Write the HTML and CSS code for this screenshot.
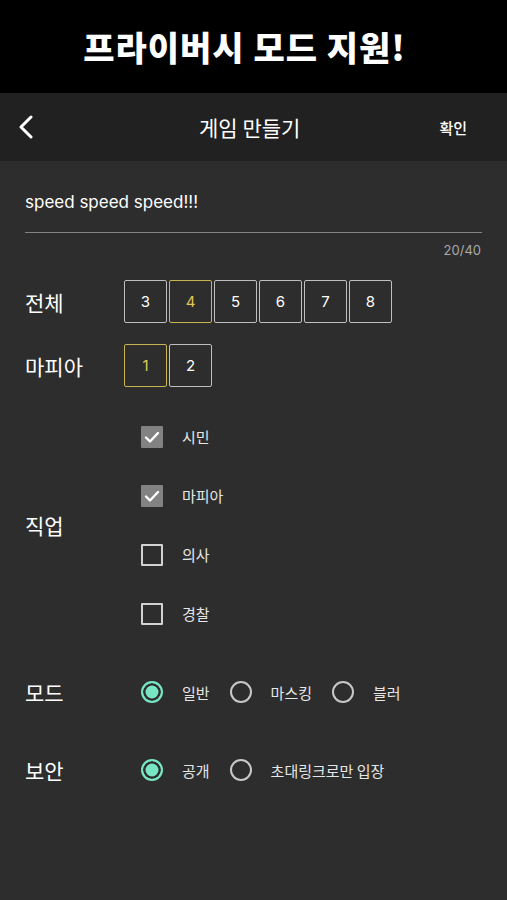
FILE: index.html
```html
<!DOCTYPE html>
<html>
<head>
  <title>게임 만들기</title>
  <meta name="viewport" content="width=device-width, initial-scale=1">
  <link rel="stylesheet" href="styles.css">
</head>
<body>

  <div class="banner">프라이버시 모드 지원!</div>

  <div class="header">
    <button class="back-button">
      <svg width="16" height="24" viewBox="0 0 16 24">
        <path d="M13 2 L3 12 L13 22" fill="none" stroke="white" stroke-width="3" stroke-linecap="round" stroke-linejoin="round"/>
      </svg>
    </button>
    <p class="header-title">게임 만들기</p>
    <button class="confirm-button">확인</button>
  </div>

  <div class="content">
    <div class="name-field">
      <p class="name-text">speed speed speed!!!</p>
    </div>
    <p class="counter">20/40</p>

    <div class="row">
      <p class="label">전체</p>
      <div class="boxes">
        <div class="num-box">3</div>
        <div class="num-box selected">4</div>
        <div class="num-box">5</div>
        <div class="num-box">6</div>
        <div class="num-box">7</div>
        <div class="num-box">8</div>
      </div>
    </div>

    <div class="row mafia-row">
      <p class="label">마피아</p>
      <div class="boxes">
        <div class="num-box selected">1</div>
        <div class="num-box">2</div>
      </div>
    </div>

    <div class="row job-row">
      <p class="label">직업</p>
      <div class="checks">
        <div class="check-item">
          <span class="checkbox checked">
            <svg width="22" height="22" viewBox="0 0 22 22">
              <path d="M5 11.5 L9 15.5 L17 7" fill="none" stroke="white" stroke-width="2.4" stroke-linecap="round" stroke-linejoin="round"/>
            </svg>
          </span>
          <span class="option-text">시민</span>
        </div>
        <div class="check-item">
          <span class="checkbox checked">
            <svg width="22" height="22" viewBox="0 0 22 22">
              <path d="M5 11.5 L9 15.5 L17 7" fill="none" stroke="white" stroke-width="2.4" stroke-linecap="round" stroke-linejoin="round"/>
            </svg>
          </span>
          <span class="option-text">마피아</span>
        </div>
        <div class="check-item">
          <span class="checkbox"></span>
          <span class="option-text">의사</span>
        </div>
        <div class="check-item">
          <span class="checkbox"></span>
          <span class="option-text">경찰</span>
        </div>
      </div>
    </div>

    <div class="row radio-row">
      <p class="label">모드</p>
      <div class="radios">
        <span class="radio checked"></span><span class="option-text">일반</span>
        <span class="radio"></span><span class="option-text">마스킹</span>
        <span class="radio"></span><span class="option-text">블러</span>
      </div>
    </div>

    <div class="row radio-row security-row">
      <p class="label">보안</p>
      <div class="radios">
        <span class="radio checked"></span><span class="option-text">공개</span>
        <span class="radio"></span><span class="option-text">초대링크로만 입장</span>
      </div>
    </div>
  </div>

</body>
</html>
```

FILE: styles.css
```css
body {
  background-color: rgb(45, 45, 45);
  color: white;
  font-family: "Noto Sans CJK KR", "Noto Sans", sans-serif;
  margin: 0;
  min-height: 900px;
}

p {
  margin: 0;
}

.banner {
  background-color: black;
  height: 93px;
  display: flex;
  justify-content: center;
  align-items: center;
  font-size: 34px;
  font-weight: 900;
  letter-spacing: 1px;
  padding-right: 18px;
  box-sizing: border-box;
}

.header {
  background-color: rgb(33, 33, 33);
  height: 68px;
  display: flex;
  align-items: center;
  justify-content: space-between;
  padding: 0 40px 0 18px;
}

.back-button {
  background-color: transparent;
  border: none;
  padding: 0;
  width: 20px;
  height: 26px;
  display: flex;
  align-items: center;
}

.header-title {
  font-size: 21px;
  font-weight: 400;
  padding-left: 22px;
}

.confirm-button {
  background-color: transparent;
  border: none;
  color: white;
  font-family: inherit;
  font-size: 15px;
  font-weight: 500;
  padding: 0;
}

.content {
  padding: 0 25px;
}

.name-field {
  border-bottom: 1.5px solid rgb(130, 130, 130);
  padding: 25px 0 14px;
}

.name-text {
  font-family: "Inter", "Noto Sans", sans-serif;
  font-size: 17px;
  line-height: 32px;
}

.counter {
  text-align: right;
  font-family: "Inter", sans-serif;
  font-size: 13px;
  color: rgb(170, 170, 170);
  margin-top: 9px;
  padding-right: 1px;
}

.row {
  display: flex;
  align-items: center;
}

.label {
  width: 99px;
  font-size: 21px;
  font-weight: 400;
}

.boxes {
  display: flex;
  gap: 2px;
  margin-top: 22px;
}

.row .label {
  margin-top: 22px;
}

.mafia-row .boxes,
.mafia-row .label {
  margin-top: 21px;
}

.num-box {
  width: 43px;
  height: 43px;
  box-sizing: border-box;
  border: 1.5px solid rgb(190, 190, 190);
  border-radius: 2px;
  display: flex;
  justify-content: center;
  align-items: center;
  font-family: "Inter", sans-serif;
  font-size: 15px;
}

.num-box.selected {
  border-color: rgb(200, 180, 80);
  color: rgb(225, 200, 90);
}

.job-row {
  margin-top: 38px;
}

.job-row .label {
  margin-top: 0;
}

.checks {
  display: flex;
  flex-direction: column;
  gap: 36px;
  padding-left: 17px;
}

.check-item {
  display: flex;
  align-items: center;
  height: 23px;
}

.checkbox {
  width: 22px;
  height: 22px;
  box-sizing: border-box;
  border: 2px solid rgb(210, 210, 210);
  border-radius: 1px;
  margin-right: 19px;
}

.checkbox.checked {
  background-color: rgb(130, 130, 130);
  border: none;
}

.option-text {
  font-size: 15px;
  color: rgb(230, 230, 230);
}

.radio-row {
  margin-top: 52px;
}

.radio-row .label {
  margin-top: 0;
}

.security-row {
  margin-top: 48px;
}

.radios {
  display: flex;
  align-items: center;
  padding-left: 17px;
}

.radio {
  width: 22px;
  height: 22px;
  box-sizing: border-box;
  border: 2px solid rgb(200, 200, 200);
  border-radius: 50%;
  margin-right: 19px;
}

.radio.checked {
  border-color: rgb(120, 230, 195);
  background-color: rgb(120, 230, 195);
  box-shadow: inset 0 0 0 2.5px rgb(45, 45, 45);
}

.radios .option-text {
  margin-right: 20px;
}
```
